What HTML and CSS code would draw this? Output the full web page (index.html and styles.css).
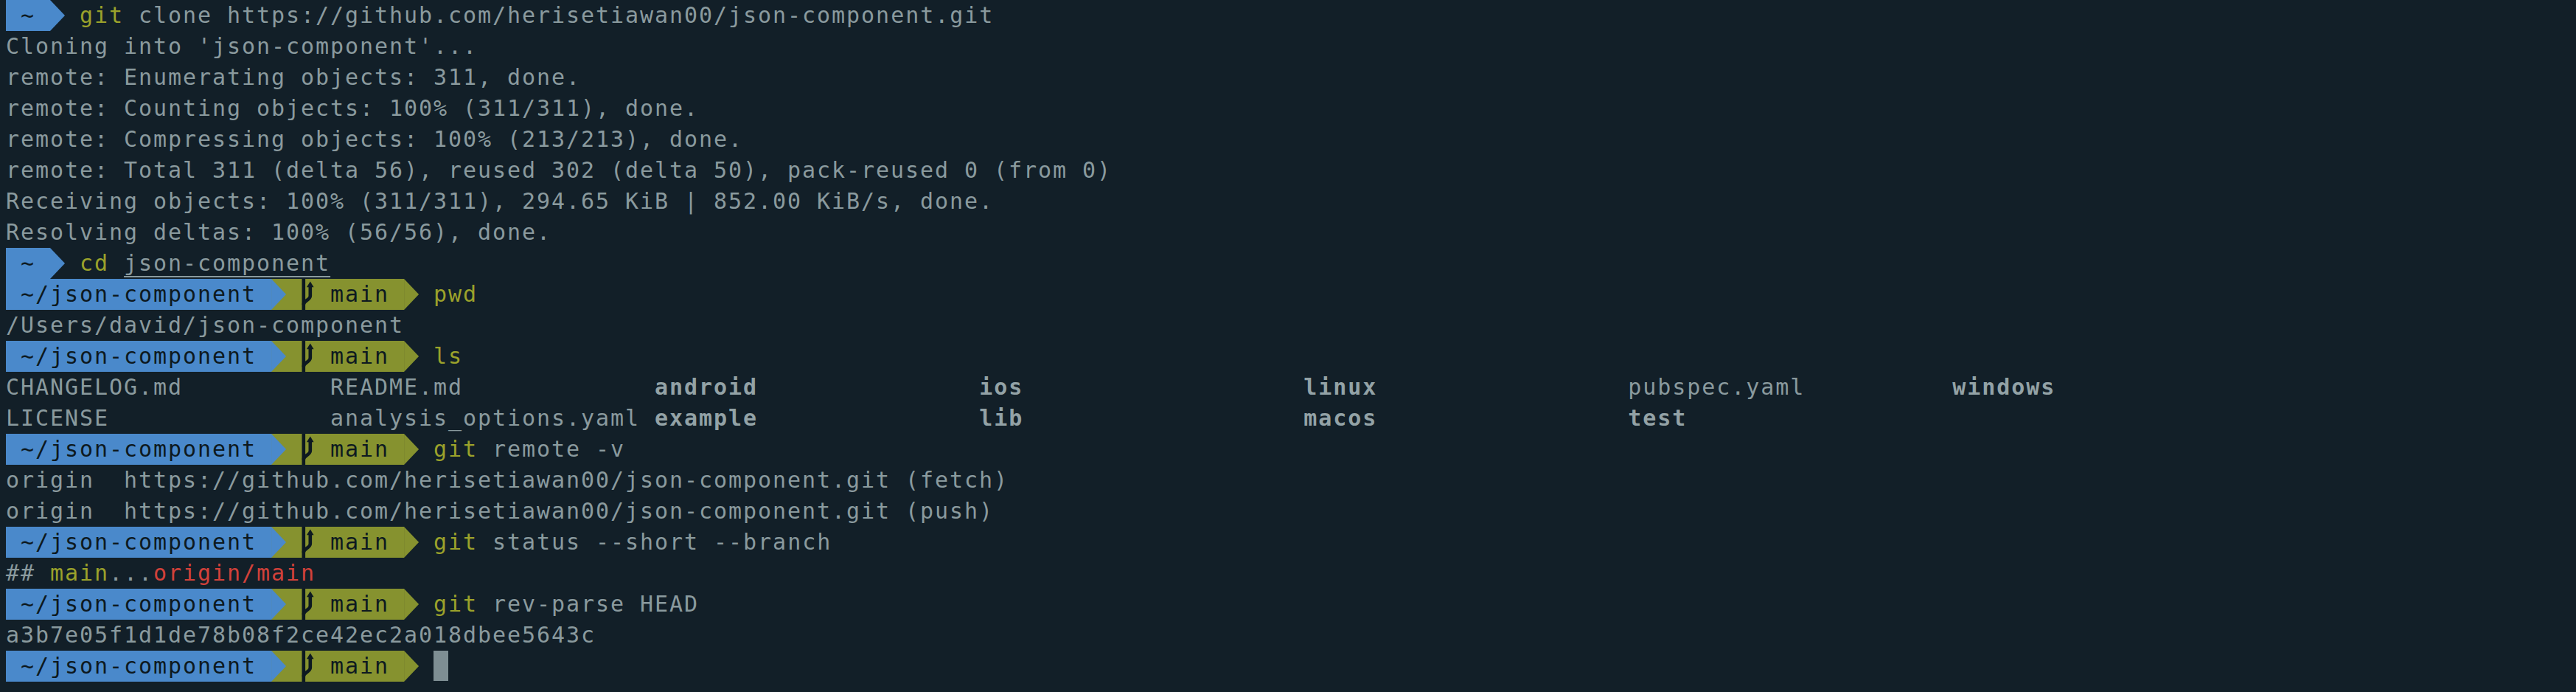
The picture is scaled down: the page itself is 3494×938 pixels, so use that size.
FILE: index.html
```html
<!DOCTYPE html>
<html lang="en">
<head>
<meta charset="utf-8">
<title>Terminal</title>
<link rel="stylesheet" href="styles.css">
</head>
<body>
<div class="term">
  <div class="ln pr"><span class="seg dir"> ~ </span><span class="sep sep-b"></span><span class="cmd"> <span class="kw">git</span> clone https://github.com/herisetiawan00/json-component.git</span></div>
  <div class="ln">Cloning into 'json-component'...</div>
  <div class="ln">remote: Enumerating objects: 311, done.</div>
  <div class="ln">remote: Counting objects: 100% (311/311), done.</div>
  <div class="ln">remote: Compressing objects: 100% (213/213), done.</div>
  <div class="ln">remote: Total 311 (delta 56), reused 302 (delta 50), pack-reused 0 (from 0)</div>
  <div class="ln">Receiving objects: 100% (311/311), 294.65 KiB | 852.00 KiB/s, done.</div>
  <div class="ln">Resolving deltas: 100% (56/56), done.</div>
  <div class="ln pr"><span class="seg dir"> ~ </span><span class="sep sep-b"></span><span class="cmd"> <span class="kw">cd</span> <span class="ul">json-component</span></span></div>

  <div class="ln pr"><span class="seg dir"> ~/json-component </span><span class="sep sep-b on-g"></span><span class="seg git"> <svg class="icon" viewBox="0 0 20 42"><rect x="1.5" y="0" width="4.6" height="42"/><path d="M3.8 35 C3.8 29 12.8 29 12.8 23 V10.5" fill="none" stroke-width="4.6"/><polygon points="12.8,3.5 17.6,11.2 8,11.2"/></svg> main </span><span class="sep sep-g"></span><span class="cmd"> <span class="kw">pwd</span></span></div>
  <div class="ln">/Users/david/json-component</div>

  <div class="ln pr"><span class="seg dir"> ~/json-component </span><span class="sep sep-b on-g"></span><span class="seg git"> <svg class="icon" viewBox="0 0 20 42"><rect x="1.5" y="0" width="4.6" height="42"/><path d="M3.8 35 C3.8 29 12.8 29 12.8 23 V10.5" fill="none" stroke-width="4.6"/><polygon points="12.8,3.5 17.6,11.2 8,11.2"/></svg> main </span><span class="sep sep-g"></span><span class="cmd"> <span class="kw">ls</span></span></div>
  <div class="ln">CHANGELOG.md          README.md             <b class="d">android</b>               <b class="d">ios</b>                   <b class="d">linux</b>                 pubspec.yaml          <b class="d">windows</b></div>
  <div class="ln">LICENSE               analysis_options.yaml <b class="d">example</b>               <b class="d">lib</b>                   <b class="d">macos</b>                 <b class="d">test</b></div>

  <div class="ln pr"><span class="seg dir"> ~/json-component </span><span class="sep sep-b on-g"></span><span class="seg git"> <svg class="icon" viewBox="0 0 20 42"><rect x="1.5" y="0" width="4.6" height="42"/><path d="M3.8 35 C3.8 29 12.8 29 12.8 23 V10.5" fill="none" stroke-width="4.6"/><polygon points="12.8,3.5 17.6,11.2 8,11.2"/></svg> main </span><span class="sep sep-g"></span><span class="cmd"> <span class="kw">git</span> remote -v</span></div>
  <div class="ln">origin  https://github.com/herisetiawan00/json-component.git (fetch)</div>
  <div class="ln">origin  https://github.com/herisetiawan00/json-component.git (push)</div>

  <div class="ln pr"><span class="seg dir"> ~/json-component </span><span class="sep sep-b on-g"></span><span class="seg git"> <svg class="icon" viewBox="0 0 20 42"><rect x="1.5" y="0" width="4.6" height="42"/><path d="M3.8 35 C3.8 29 12.8 29 12.8 23 V10.5" fill="none" stroke-width="4.6"/><polygon points="12.8,3.5 17.6,11.2 8,11.2"/></svg> main </span><span class="sep sep-g"></span><span class="cmd"> <span class="kw">git</span> status --short --branch</span></div>
  <div class="ln">## <span class="br">main</span>...<span class="rm">origin/main</span></div>

  <div class="ln pr"><span class="seg dir"> ~/json-component </span><span class="sep sep-b on-g"></span><span class="seg git"> <svg class="icon" viewBox="0 0 20 42"><rect x="1.5" y="0" width="4.6" height="42"/><path d="M3.8 35 C3.8 29 12.8 29 12.8 23 V10.5" fill="none" stroke-width="4.6"/><polygon points="12.8,3.5 17.6,11.2 8,11.2"/></svg> main </span><span class="sep sep-g"></span><span class="cmd"> <span class="kw">git</span> rev-parse HEAD</span></div>
  <div class="ln">a3b7e05f1d1de78b08f2ce42ec2a018dbee5643c</div>

  <div class="ln pr"><span class="seg dir"> ~/json-component </span><span class="sep sep-b on-g"></span><span class="seg git"> <svg class="icon" viewBox="0 0 20 42"><rect x="1.5" y="0" width="4.6" height="42"/><path d="M3.8 35 C3.8 29 12.8 29 12.8 23 V10.5" fill="none" stroke-width="4.6"/><polygon points="12.8,3.5 17.6,11.2 8,11.2"/></svg> main </span><span class="sep sep-g"></span><span class="cmd"> <span class="cursor"></span></span></div>
</div>
</body>
</html>
```

FILE: styles.css
```css
html, body {
  margin: 0;
  padding: 0;
  background: #121f28;
  height: 100%;
}

.term {
  padding: 0 8px;
  font-family: "DejaVu Sans Mono", "Liberation Mono", monospace;
  font-size: 30px;
  line-height: 42px;
  letter-spacing: 1.94px;
  color: #8a9a9e;
}

.ln {
  height: 42px;
  white-space: pre;
}

.pr {
  display: flex;
  align-items: stretch;
}

.seg {
  display: block;
  color: #0d1920;
}

.cmd {
  display: block;
}

.dir {
  background: #4a89cb;
}

.git {
  background: #86922f;
}

.sep {
  flex: none;
  width: 20px;
  height: 42px;
}

.sep::before {
  content: "";
  display: block;
  width: 100%;
  height: 100%;
  clip-path: polygon(0 0, 100% 50%, 0 100%);
}

.sep-b::before {
  background: #4a89cb;
}

.sep-g::before {
  background: #86922f;
}

.on-g {
  background: #86922f;
}

.icon {
  display: inline-block;
  vertical-align: top;
  width: 20px;
  height: 42px;
  fill: #0d1920;
  stroke: #0d1920;
}

.icon rect,
.icon polygon {
  stroke: none;
}

.kw {
  color: #9ba22b;
}

.ul {
  text-decoration: underline;
  text-decoration-thickness: 1.5px;
  text-underline-offset: 7px;
}

.d {
  font-weight: bold;
  color: #93a2a6;
}

.br {
  color: #9ba22b;
}

.rm {
  color: #d2413a;
}

.cursor {
  display: inline-block;
  vertical-align: top;
  width: 20px;
  height: 41px;
  background: #7e8e93;
}
```
